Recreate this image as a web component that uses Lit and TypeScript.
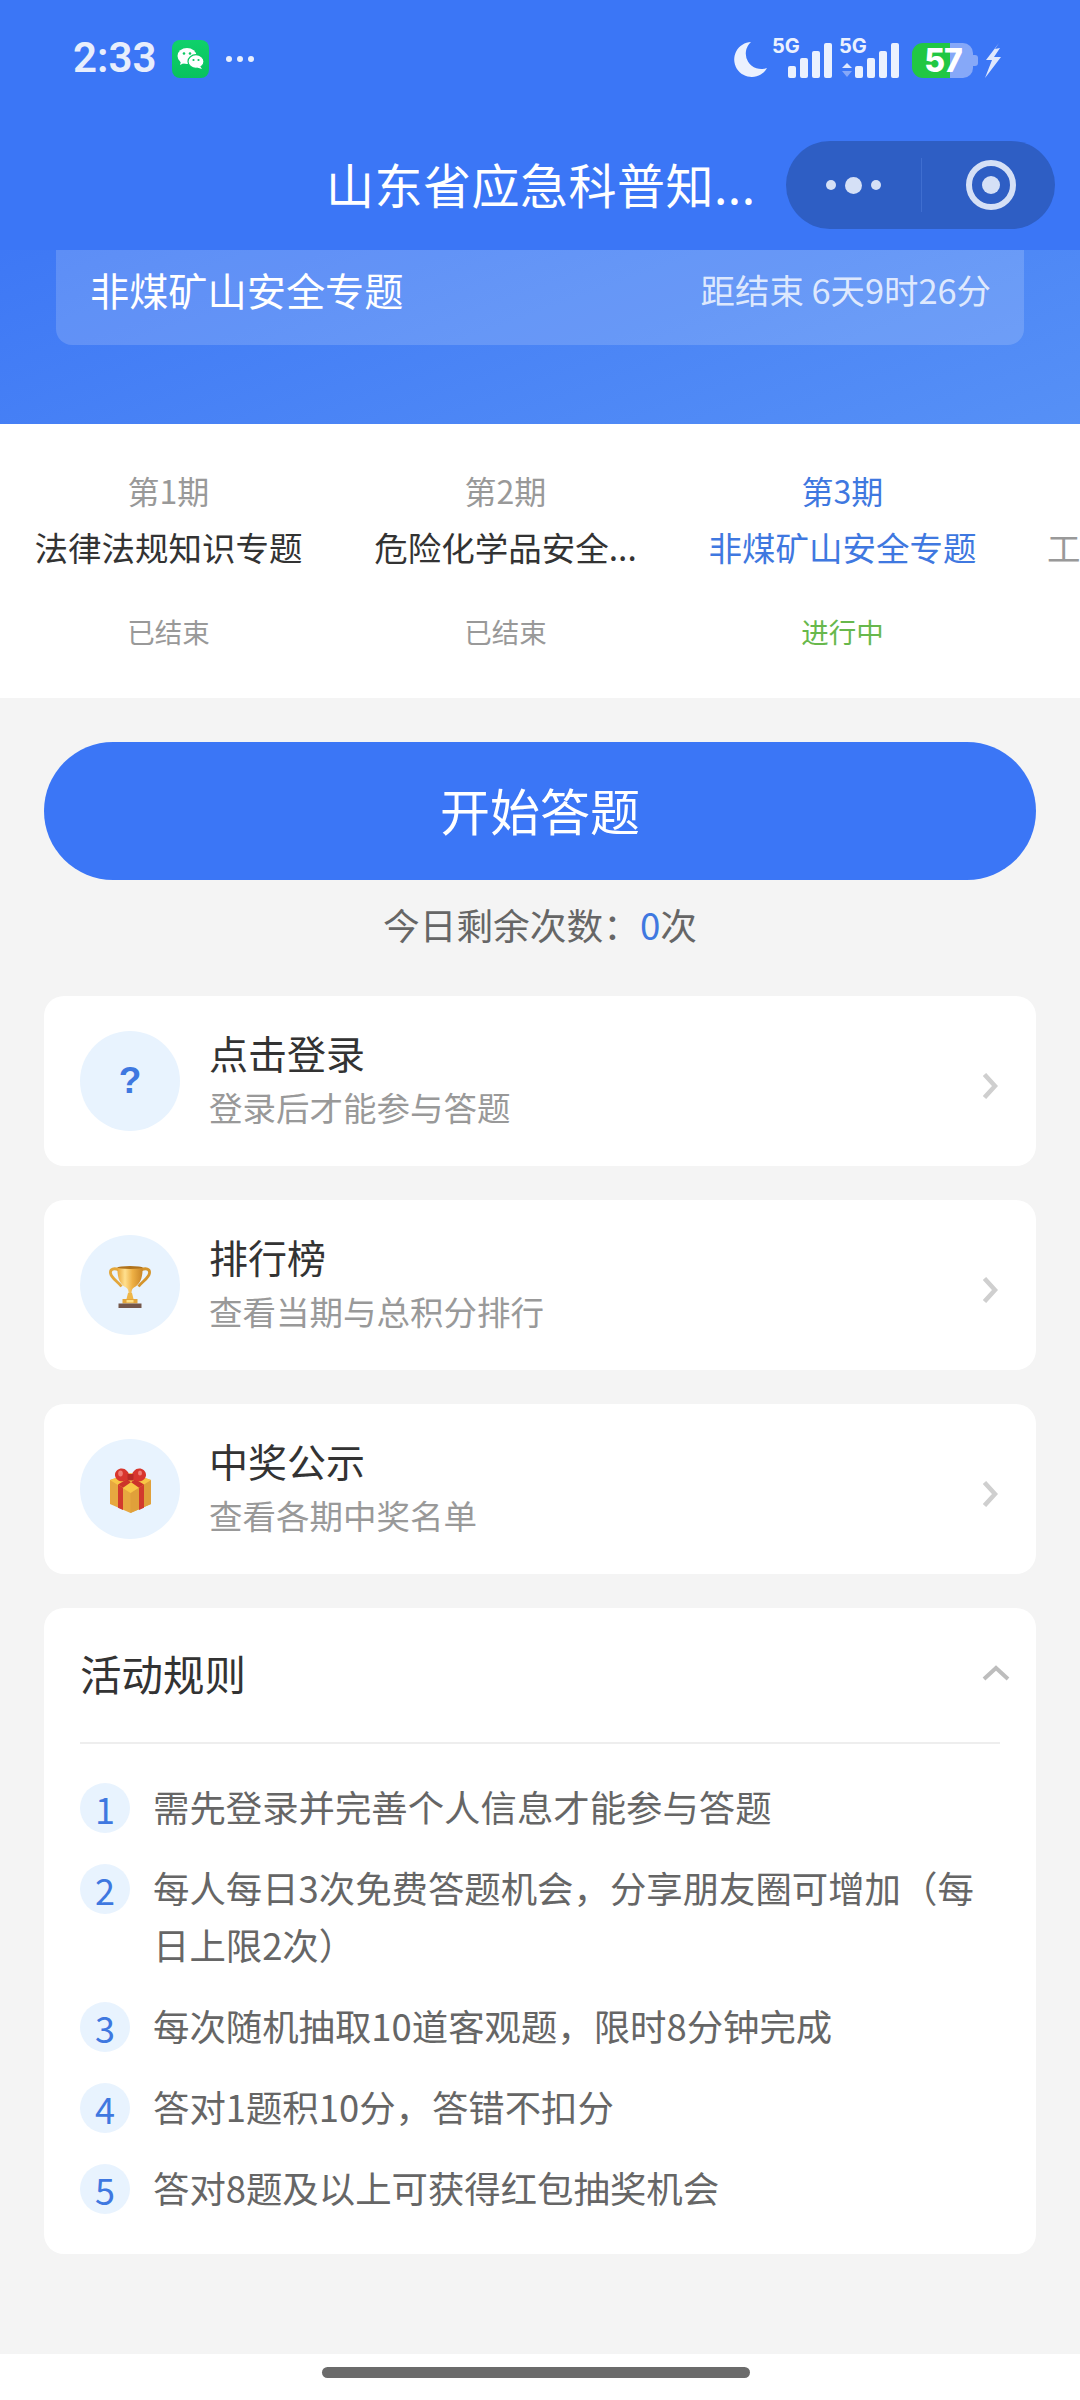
import { LitElement, html, css, svg } from "lit";
import { customElement } from "lit/decorators.js";

const trophy = svg`<svg class="glyph" width="42" height="42" viewBox="0 0 42 42">
  <defs><linearGradient id="cup" x1="0" x2="1"><stop offset="0" stop-color="#eaa73a"/><stop offset=".3" stop-color="#ffe08f"/><stop offset=".6" stop-color="#eeb045"/><stop offset="1" stop-color="#c98526"/></linearGradient></defs>
  <path d="M10 4C5 1.500 1 3 1.500 7c.5 5 7 8 11 13.500" fill="none" stroke="#e3a63a" stroke-width="2.800"/>
  <path d="M32 4c5-2.500 9-1 8.500 3-.5 5-7 8-11 13.500" fill="none" stroke="#d4942c" stroke-width="2.800"/>
  <path d="M8.500 1h25c.5 10-2 17-8.500 20.500-2 1.200-2.500 3-2.500 5.500h-3c0-2.500-.5-4.300-2.500-5.500C10.500 18 8 11 8.500 1z" fill="url(#cup)"/>
  <ellipse cx="21" cy="1.500" rx="12.500" ry="1.500" fill="#b0721b"/>
  <path d="M19 27h4l1.500 6h-7z" fill="#eeb648"/>
  <path d="M13.500 33h15v4.500h-15z" fill="#e3a53a"/><path d="M17.500 34h7v2.500h-7z" fill="#ffdf85"/>
  <path d="M9.500 37.500h23V42h-23z" fill="#74564a"/>
</svg>`;

const gift = svg`<svg class="glyph" width="41" height="45" viewBox="0 0 41 45">
  <path d="M0 12 20.500 5 41 12v24L20.500 45 0 36z" fill="#e7a840"/>
  <path d="M20.500 25 41 12v24L20.500 45z" fill="#e0a03a"/>
  <path d="M0 12 20.500 5 41 12 20.500 25z" fill="#f8c646"/>
  <path d="M8 16.500l5 3.200V42l-5-2.200zM29 19.700l5-3.200v23.300L29 42z" fill="#d23a2d"/>
  <path d="M8 16.500 22 8l5 2-14 9.700zM34 16.500 20 8l-5 2 14 9.700z" fill="#cc342a"/>
  <path d="M19.500 10.500C14 15 6 14 5 7.500 4.500 1 13-2 17 3c2 2 2.500 4.500 2.500 7.500z" fill="#d8362d"/>
  <path d="M21.500 10.500C27 15 35 14 36 7.500 36.500 1 28-2 24 3c-2 2-2.500 4.500-2.500 7.500z" fill="#d8362d"/>
  <ellipse cx="10.500" cy="5.500" rx="2.300" ry="3" fill="#ef7d73"/><ellipse cx="30" cy="5" rx="2" ry="2.600" fill="#ef7d73"/>
  <path d="M17.500 6h6v6.500h-6z" fill="#b92a24"/>
</svg>`;

const q = html`<span class="q">?</span>`;

const statusIcons = svg`<svg class="status-icons" width="272" height="54" viewBox="0 -10 272 54">
  <path d="M17 6A17.500 17.500 0 1 0 33 32 15.500 15.500 0 0 1 17 6z" fill="#ebf1fe"/>
  <text x="38" y="17" class="net">5G</text>
  <g fill="#ebf1fe">
    <rect x="54" y="30" width="8" height="12" rx="2"/><rect x="66" y="22" width="8" height="20" rx="2"/><rect x="78" y="15" width="8" height="27" rx="2"/><rect x="90" y="7" width="8" height="35" rx="2"/>
  </g>
  <text x="105" y="17" class="net">5G</text>
  <path d="M113 27l5 5h-10z" fill="#dfe8fd"/><path d="M108 35h10l-5 6z" fill="#86a8f8"/>
  <g fill="#ebf1fe">
    <rect x="121" y="30" width="8" height="12" rx="2"/><rect x="133" y="22" width="8" height="20" rx="2"/><rect x="145" y="15" width="8" height="27" rx="2"/><rect x="157" y="7" width="8" height="35" rx="2"/>
  </g>
  <path d="M190 7h39a10 10 0 0 1 10 10v15a10 10 0 0 1-10 10h-39z" fill="#86a8f8"/>
  <path d="M239 19h2a3 3 0 0 1 3 3v5a3 3 0 0 1-3 3h-2z" fill="#86a8f8"/>
  <path d="M189 7h27v35h-27a11 11 0 0 1-11-11V18a11 11 0 0 1 11-11z" fill="#21c743"/>
  <text x="209" y="36" class="batt">57</text>
  <path d="M265 7 252 24l6 0-7 18 16-21-7 0 6-9-5 1z" fill="#dfe8fd"/>
</svg>`;

const wechat = svg`<svg class="wechat" width="37" height="38" viewBox="0 0 37 38">
  <defs><linearGradient id="wx" x1="0" y1="0" x2="0" y2="1"><stop offset="0" stop-color="#0fd16a"/><stop offset="1" stop-color="#08c25e"/></linearGradient></defs>
  <rect width="37" height="38" rx="8" fill="url(#wx)"/>
  <ellipse cx="15" cy="16" rx="9.500" ry="8" fill="#fff"/><path d="M9 21l-1 4 5-2.500z" fill="#fff"/>
  <ellipse cx="24" cy="21.500" rx="8" ry="6.800" fill="#fff" stroke="#0bc963" stroke-width="1.200"/><path d="M28 26l2 3-5-1.500z" fill="#fff"/>
  <circle cx="12" cy="13.500" r="1.300" fill="#0bc963"/><circle cx="18" cy="13.500" r="1.300" fill="#0bc963"/>
  <circle cx="21.500" cy="20" r="1.100" fill="#0bc963"/><circle cx="26.500" cy="20" r="1.100" fill="#0bc963"/>
</svg>`;

const chevron = svg`<svg class="chev" width="15" height="26" viewBox="0 0 15 26"><path d="M1.500 1.500 12 13 1.500 24.500" fill="none" stroke="#cfcfcf" stroke-width="4.500"/></svg>`;

@customElement("app-root")
export class AppRoot extends LitElement {
  static styles = css`
    :host { display: block; width: 1080px; height: 2400px; font-family: "Noto Sans CJK SC", "Noto Sans", sans-serif; background: #f4f4f4; overflow: hidden; }
    .page { display: flex; flex-direction: column; height: 2400px; }
    .top { height: 250px; background: #3b76f6; display: flex; flex-direction: column; flex: none; }
    .status { height: 118px; padding: 36px 0 0 73px; box-sizing: border-box; display: flex; align-items: flex-start; }
    .time { font-family: Roboto, sans-serif; font-size: 42px; font-weight: 600; line-height: 44px; color: #e8eefc; width: 99px; }
    .wechat { margin-top: 4px; }
    .more { display: flex; gap: 5px; margin: 20px 0 0 17px; }
    .more i { width: 6px; height: 6px; border-radius: 50%; background: #e8eefc; }
    .status-icons { margin-left: auto; margin-right: 74px; margin-top: -10px; }
    .net { font: 700 20px Inter, Roboto, sans-serif; fill: #ebf1fe; }
    .batt { font: 800 32px Inter, Roboto, sans-serif; fill: #fff; text-anchor: middle; letter-spacing: -1px; }
    .nav { display: flex; align-items: center; height: 88px; margin-top: 23px; }
    .nav-title { flex: 1; padding-left: 326px; color: #fff; font-size: 48px; line-height: 84px; height: 88px; letter-spacing: .5px; white-space: nowrap; }
    .capsule { width: 269px; height: 88px; margin-right: 25px; border-radius: 44px; background: #2e5ec4; display: flex; align-items: center; flex: none; }
    .cap-dots { width: 135px; display: flex; justify-content: center; align-items: center; gap: 9px; }
    .cap-dots i { width: 10px; height: 10px; border-radius: 50%; background: #d5e0f6; }
    .cap-dots i.mid { width: 17px; height: 17px; }
    .cap-sep { width: 1px; height: 54px; background: #3f6ed0; }
    .cap-ring { flex: 1; display: flex; justify-content: center; padding-left: 4px; }
    .ring { width: 50px; height: 50px; box-sizing: border-box; border: 6px solid #d5e0f6; border-radius: 50%; display: flex; align-items: center; justify-content: center; }
    .ring i { width: 18px; height: 18px; border-radius: 50%; background: #d5e0f6; }
    .hero { height: 174px; flex: none; box-sizing: border-box; padding: 0 56px; background: linear-gradient(160deg, #3e78f5 0%, #5690f6 100%); }
    .hero-card { height: 95px; box-sizing: border-box; padding: 0 33px 17px 34px; display: flex; align-items: center; justify-content: space-between; border-radius: 0 0 16px 16px; background: rgba(255,255,255,.16); }
    .hero-name { color: #fff; font-size: 39.200px; line-height: 78px; }
    .hero-time { color: rgba(255,255,255,.8); font-size: 34.400px; line-height: 78px; }
    .tabs { height: 274px; background: #fff; display: flex; overflow: hidden; flex: none; }
    .tab { width: 337px; flex: none; padding-top: 46px; text-align: center; box-sizing: border-box; }
    .tab .no { font-size: 32px; line-height: 40px; color: #999; }
    .tab .name { font-size: 33.500px; line-height: 46px; margin-top: 14px; color: #333; white-space: nowrap; }
    .tab .st { font-size: 27.500px; line-height: 40px; margin-top: 41px; color: #999; }
    .tab.on .no, .tab.on .name { color: #3f78e0; }
    .tab.on .st { color: #67b84c; }
    .tab.cut { text-align: left; padding-left: 36px; }
    .tab.cut .name { color: #999; }
    .main { flex: 1; background: #f4f4f4; padding: 44px 44px 0; display: flex; flex-direction: column; }
    .start { height: 138px; box-sizing: border-box; padding-bottom: 5px; border-radius: 69px; background: #3b76f6; color: #fff; font-size: 50px; display: flex; align-items: center; justify-content: center; }
    .left { margin-top: 18px; height: 52px; text-align: center; font-size: 36.700px; line-height: 52px; color: #666; }
    .left b { font-weight: 400; color: #3f78e0; }
    .card { margin-top: 34px; height: 170px; background: #fff; border-radius: 20px; display: flex; align-items: center; padding: 0 36px; }
    .left + .card { margin-top: 46px; }
    .circle { width: 100px; height: 100px; border-radius: 50%; background: #e8f3fe; display: flex; align-items: center; justify-content: center; flex: none; }
    .glyph { margin-top: 3px; }
    .q { color: #3f78e0; font: 700 37px "Liberation Sans", sans-serif; }
    .txt { margin-left: 29px; flex: 1; margin-top: -6px; }
    .txt .t { font-size: 39px; line-height: 54px; color: #333; }
    .txt .s { font-size: 33.500px; line-height: 48px; color: #999; margin-top: 4px; }
    .chev { margin: 10px 2px 0 0; }
    .rules { margin-top: 34px; height: 646px; background: #fff; border-radius: 20px; padding: 0 36px; box-sizing: border-box; }
    .rules-head { height: 136px; box-sizing: border-box; padding-bottom: 4px; display: flex; align-items: center; justify-content: space-between; border-bottom: 2px solid #eee; font-size: 41.500px; color: #333; }
    .up { margin-right: -10px; }
    .list { padding-top: 34px; display: flex; flex-direction: column; gap: 24px; }
    .rule { display: flex; font-size: 36.400px; line-height: 57px; color: #666; }
    .num { width: 50px; height: 50px; margin: 5px 23px 0 0; border-radius: 50%; background: #e8f3fe; color: #3f78e0; font-size: 36px; line-height: 50px; text-align: center; flex: none; }
    .bar { height: 46px; background: #fff; flex: none; display: flex; align-items: flex-start; }
    .pill { width: 428px; height: 11px; margin: 13px 0 0 322px; border-radius: 6px; background: #6b6b6b; }
  `;

  render() {
    const tabs = [
      { no: "第1期", name: "法律法规知识专题", st: "已结束", cls: "" },
      { no: "第2期", name: "危险化学品安全...", st: "已结束", cls: "" },
      { no: "第3期", name: "非煤矿山安全专题", st: "进行中", cls: "on" },
      { no: "", name: "工", st: "", cls: "cut" },
    ];
    const cards = [
      { icon: q, t: "点击登录", s: "登录后才能参与答题" },
      { icon: trophy, t: "排行榜", s: "查看当期与总积分排行" },
      { icon: gift, t: "中奖公示", s: "查看各期中奖名单" },
    ];
    const rules = [
      "需先登录并完善个人信息才能参与答题",
      "每人每日3次免费答题机会，分享朋友圈可增加（每日上限2次）",
      "每次随机抽取10道客观题，限时8分钟完成",
      "答对1题积10分，答错不扣分",
      "答对8题及以上可获得红包抽奖机会",
    ];
    return html`<div class="page">
      <div class="top">
        <div class="status">
          <span class="time">2:33</span>${wechat}
          <span class="more"><i></i><i></i><i></i></span>
          ${statusIcons}
        </div>
        <div class="nav">
          <div class="nav-title">山东省应急科普知...</div>
          <div class="capsule">
            <div class="cap-dots"><i></i><i class="mid"></i><i></i></div>
            <div class="cap-sep"></div>
            <div class="cap-ring"><div class="ring"><i></i></div></div>
          </div>
        </div>
      </div>
      <div class="hero">
        <div class="hero-card">
          <span class="hero-name">非煤矿山安全专题</span>
          <span class="hero-time">距结束 6天9时26分</span>
        </div>
      </div>
      <div class="tabs">
        ${tabs.map(
          (x) => html`<div class="tab ${x.cls}">
            <div class="no">${x.no || "\u00a0"}</div>
            <div class="name">${x.name}</div>
            <div class="st">${x.st}</div>
          </div>`
        )}
      </div>
      <div class="main">
        <div class="start">开始答题</div>
        <div class="left">今日剩余次数：<b>0</b>次</div>
        ${cards.map(
          (c) => html`<div class="card">
            <div class="circle">${c.icon}</div>
            <div class="txt"><div class="t">${c.t}</div><div class="s">${c.s}</div></div>
            ${chevron}
          </div>`
        )}
        <div class="rules">
          <div class="rules-head">
            <span>活动规则</span>
            <svg class="up" width="28" height="16" viewBox="0 0 28 16"><path d="M2 14 14 3l12 11" fill="none" stroke="#bdbdbd" stroke-width="4"/></svg>
          </div>
          <div class="list">
            ${rules.map(
              (r, i) => html`<div class="rule"><span class="num">${i + 1}</span><span>${r}</span></div>`
            )}
          </div>
        </div>
      </div>
      <div class="bar"><div class="pill"></div></div>
    </div>`;
  }
}
